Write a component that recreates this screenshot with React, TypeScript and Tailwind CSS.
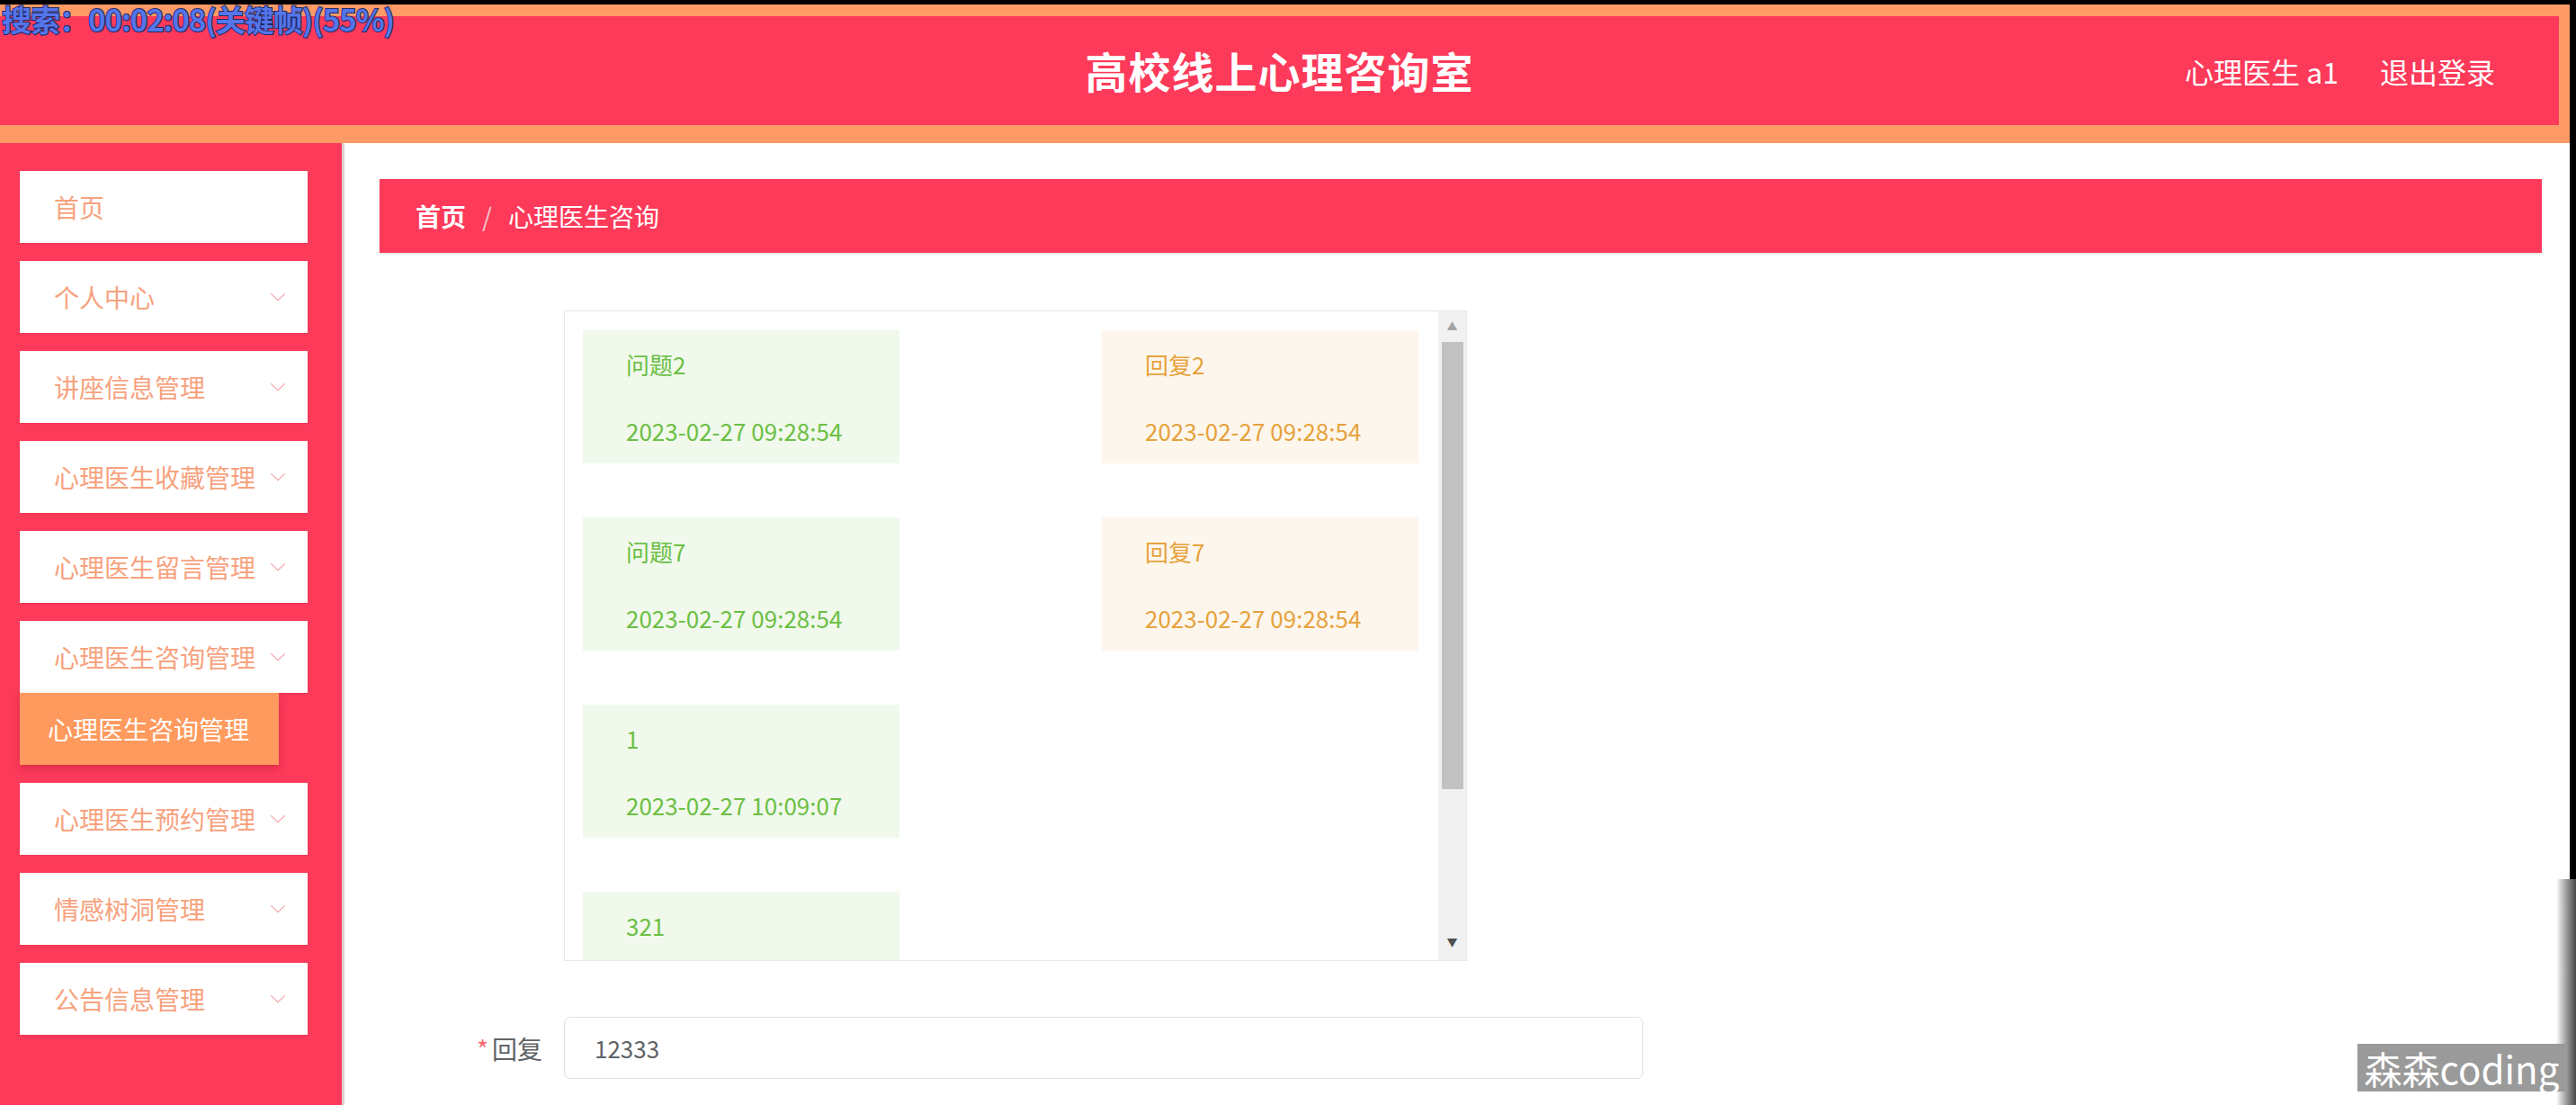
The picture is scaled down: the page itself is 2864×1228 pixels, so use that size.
import React from 'react';

/* ---------- data ---------- */
type Msg = { id: number; ask: string; askTime: string; reply?: string; replyTime?: string };

const MESSAGES: Msg[] = [
  { id: 1, ask: '问题2', askTime: '2023-02-27 09:28:54', reply: '回复2', replyTime: '2023-02-27 09:28:54' },
  { id: 2, ask: '问题7', askTime: '2023-02-27 09:28:54', reply: '回复7', replyTime: '2023-02-27 09:28:54' },
  { id: 3, ask: '1', askTime: '2023-02-27 10:09:07' },
  { id: 4, ask: '321', askTime: '2023-02-27 10:12:40' },
];

const MENU = [
  { label: '首页', arrow: false },
  { label: '个人中心', arrow: true },
  { label: '讲座信息管理', arrow: true },
  { label: '心理医生收藏管理', arrow: true },
  { label: '心理医生留言管理', arrow: true },
  { label: '心理医生咨询管理', arrow: true, open: true, children: ['心理医生咨询管理'] },
  { label: '心理医生预约管理', arrow: true },
  { label: '情感树洞管理', arrow: true },
  { label: '公告信息管理', arrow: true },
];

function Chevron() {
  return (
    <svg width="22" height="22" viewBox="0 0 24 24" fill="none" stroke="#f5b0b6" strokeWidth="1.5" strokeLinecap="round" strokeLinejoin="round">
      <path d="M4 8.5l8 7.5 8-7.5" />
    </svg>
  );
}

/* ---------- layout pieces ---------- */
function Header() {
  return (
    <div className="bg-[#ff9a66] pt-[13px] pb-[20px]">
      <div className="mr-[19px] h-[121px] bg-[#fd3a5a] grid grid-cols-[1fr_auto_1fr] items-center">
        <div />
        <h1 className="text-white text-[47px] font-bold tracking-[1px]">高校线上心理咨询室</h1>
        <div className="flex justify-end items-center pr-[71px] text-white text-[32px]">
          <span>心理医生 a1</span>
          <span className="ml-[46px]">退出登录</span>
        </div>
      </div>
    </div>
  );
}

function Sidebar() {
  return (
    <aside className="w-[383px] shrink-0 bg-[#fd3a5a] border-r-[3px] border-[#e3cdd0] pt-[31px]">
      {MENU.map((m) => (
        <div key={m.label} className="mb-[20px]">
          <div className="ml-[22px] w-[320px] h-[80px] bg-white flex items-center justify-between pl-[38px] pr-[22px] shadow-[0_1px_2px_rgba(0,0,0,0.08)]">
            <span className="text-[28px] text-[#f7a27e]">{m.label}</span>
            {m.arrow && <Chevron />}
          </div>
          {m.children?.map((c) => (
            <div
              key={c}
              className="ml-[22px] w-[288px] h-[80px] bg-[#ff9a5e] flex items-center pl-[31px] text-white text-[28px] shadow-[0_4px_10px_rgba(120,0,20,0.25)]"
            >
              {c}
            </div>
          ))}
        </div>
      ))}
    </aside>
  );
}

function Bubble({ text, time, tone }: { text: string; time: string; tone: 'ask' | 'reply' }) {
  const cls =
    tone === 'ask' ? 'bg-[#f0f9eb] text-[#6cbf45]' : 'bg-[#fdf6ec] text-[#e6a23c]';
  return (
    <div className={`w-[352px] h-[148px] shrink-0 pl-[48px] pt-[20px] text-[26px] leading-[36px] ${cls}`}>
      <div>{text}</div>
      <div className="mt-[38px]">{time}</div>
    </div>
  );
}

function ChatBox() {
  return (
    <div className="w-[1004px] h-[723px] border border-[#e4e7ed] flex">
      <div className="flex-1 overflow-hidden pt-[21px] pl-[20px] pr-[22px]">
        {MESSAGES.map((m) => (
          <div key={m.id} className="flex justify-between mb-[60px]">
            <Bubble text={m.ask} time={m.askTime} tone="ask" />
            {m.reply && m.replyTime && <Bubble text={m.reply} time={m.replyTime} tone="reply" />}
          </div>
        ))}
      </div>
      {/* scrollbar */}
      <div className="w-[31px] bg-[#f1f1f1] flex flex-col items-center">
        <div className="h-[34px] flex items-center justify-center text-[#a3a3a3] text-[12px]">▲</div>
        <div className="w-[24px] h-[497px] bg-[#c1c1c1]" />
        <div className="flex-1" />
        <div className="h-[40px] flex items-center justify-center text-[#505050] text-[12px]">▼</div>
      </div>
    </div>
  );
}

function Content() {
  return (
    <main className="flex-1 bg-white pl-[39px] pr-[38px] pt-[40px]">
      <div className="h-[82px] bg-[#fd3a5a] flex items-center pl-[40px] text-[28px] text-white shadow-[0_1px_3px_rgba(0,0,0,0.15)]">
        <span className="font-bold">首页</span>
        <span className="mx-[18px] text-[#f1c6cc]">/</span>
        <span>心理医生咨询</span>
      </div>

      <div className="mt-[64px] flex">
        <div className="w-[205px] shrink-0" />
        <ChatBox />
      </div>

      <div className="mt-[62px] flex items-center">
        <label className="w-[205px] shrink-0 text-right pr-[24px] text-[28px] text-[#606266]">
          <span className="text-[#f56c6c] mr-[4px]">*</span>回复
        </label>
        <div className="w-[1200px] h-[69px] border border-[#dcdfe6] rounded-[7px] flex items-center pl-[33px] text-[26px] text-[#606266]">
          12333
        </div>
      </div>
    </main>
  );
}

export default function App() {
  return (
    <div className="relative w-[2864px] h-[1228px] overflow-hidden bg-white [font-family:'Noto_Sans_CJK_SC','Noto_Sans',sans-serif]">
      <div className="h-[5px] bg-black" />
      <Header />
      <div className="flex h-[1069px]">
        <Sidebar />
        <Content />
      </div>

      {/* video player overlays */}
      <div className="absolute left-[2px] top-[2px] text-[33px] font-bold leading-[38px] text-[#5575ea] [-webkit-text-stroke:2px_#1f2a66] [paint-order:stroke_fill] tracking-[-1px]">
        搜索：00:02:08(关键帧)(55%)
      </div>
      <div className="absolute right-0 top-0 w-[7px] h-[977px] bg-black" />
      <div className="absolute right-0 top-[977px] w-[22px] h-[251px] bg-gradient-to-r from-white to-[#4a4a4a]" />
      <div className="absolute left-[2621px] top-[1160px] w-[232px] h-[53px] bg-[#9a9a9a] flex items-center justify-center text-white text-[42px] leading-none">
        森森coding
      </div>
    </div>
  );
}
